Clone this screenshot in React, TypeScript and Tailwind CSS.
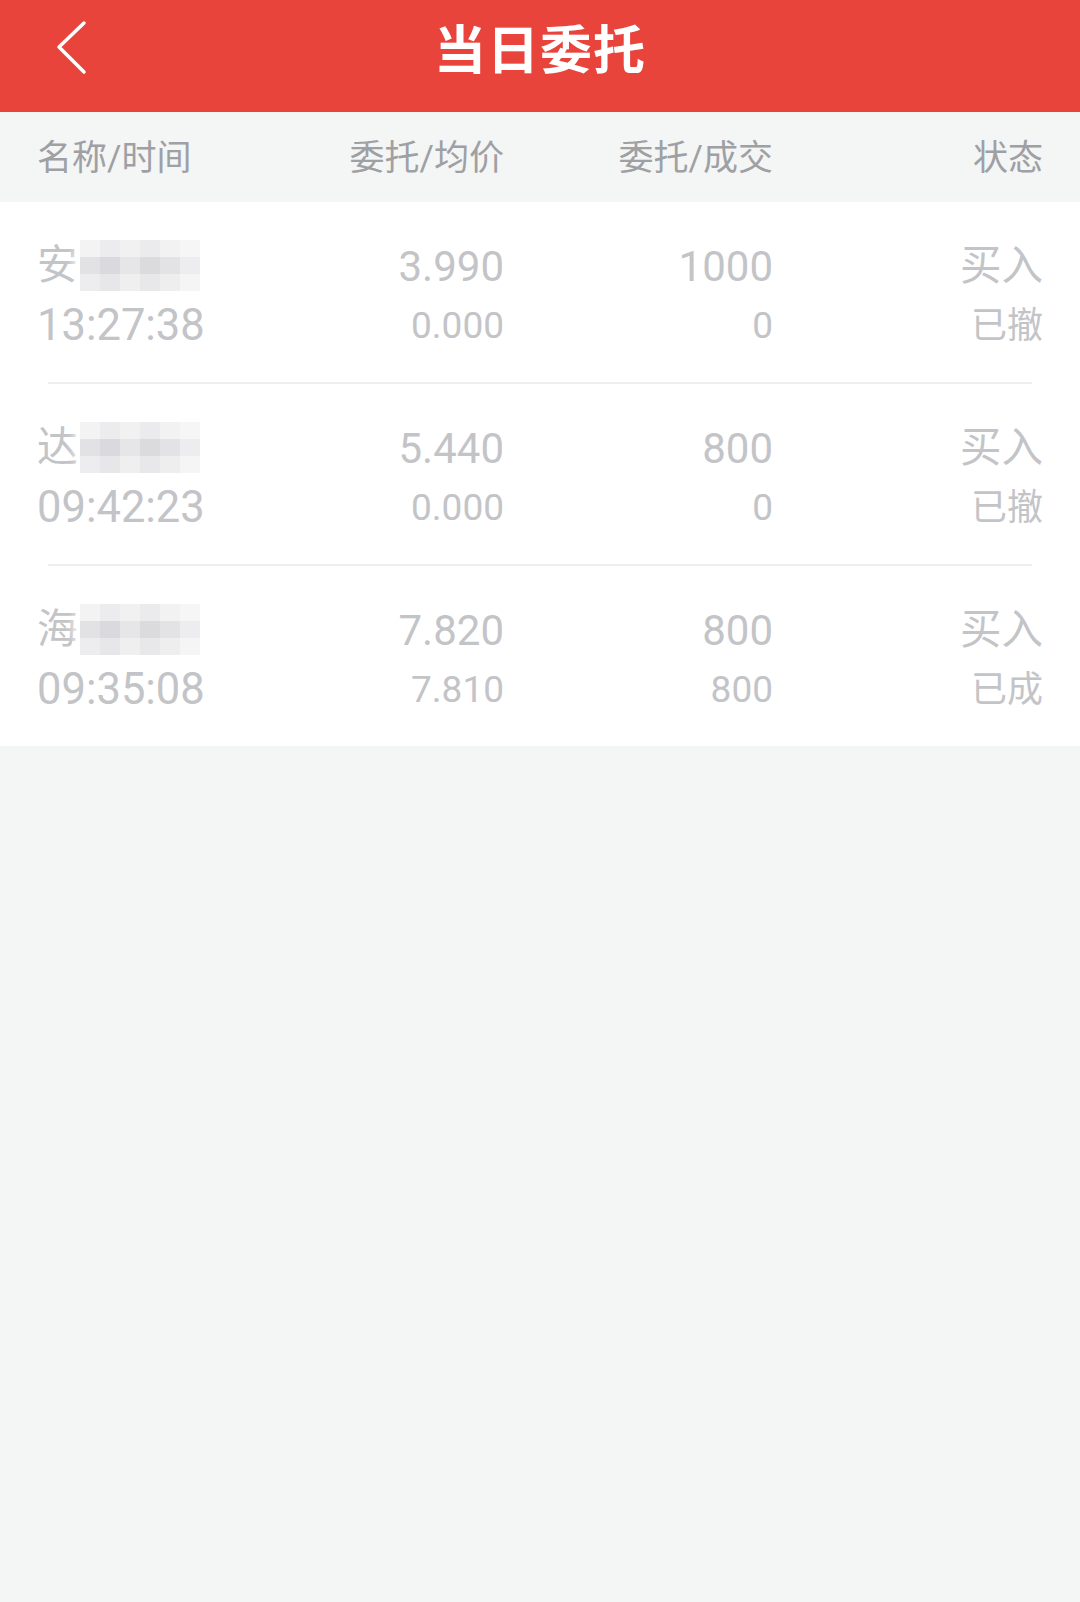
import React from "react";

const ORDERS = [
  { name: "安", time: "13:27:38", price: "3.990", avg: "0.000", qty: "1000", deal: "0", side: "买入", status: "已撤" },
  { name: "达", time: "09:42:23", price: "5.440", avg: "0.000", qty: "800", deal: "0", side: "买入", status: "已撤" },
  { name: "海", time: "09:35:08", price: "7.820", avg: "7.810", qty: "800", deal: "800", side: "买入", status: "已成" },
];

const FONT = { fontFamily: "Roboto, 'Noto Sans CJK SC', sans-serif" };

// pixelated blur over the stock name
const Mosaic = () => {
  const shades = [
    ["#f3f3f4", "#ececee", "#f1f1f2", "#ebebed", "#f2f2f3", "#f6f6f7"],
    ["#e2e2e4", "#dadade", "#e6e6e8", "#dbdbde", "#e3e3e5", "#ededef"],
    ["#ededef", "#e7e7e9", "#efeff0", "#e8e8ea", "#eeeeef", "#f5f5f6"],
  ];
  return (
    <div className="relative ml-[2px] h-[52px] w-[200px]">
      <div className="absolute left-[-6px] top-[-10px] h-[66px] w-[210px] rounded-[33px] bg-white blur-[4px]" />
      <div className="absolute left-0 top-0 flex flex-col">
        {shades.map((row, i) => (
          <div key={i} className="flex">
            {row.map((c, j) => (
              <div key={j} className="h-[17px] w-[20px]" style={{ backgroundColor: c }} />
            ))}
          </div>
        ))}
      </div>
    </div>
  );
};

export default function App() {
  return (
    <div className="min-h-[1602px] w-[1080px] bg-[#f4f5f5]" style={FONT}>
      <header className="relative flex h-[112px] items-center justify-center bg-[#e9443c]">
        <svg className="absolute left-[52px] top-[18px]" width="40" height="60" viewBox="0 0 40 60">
          <path d="M32 5 L7 29 L32 54" fill="none" stroke="white" strokeWidth="3.5" strokeLinecap="round" strokeLinejoin="round" />
        </svg>
        <h1 className="-mt-[8px] text-[52px] font-bold tracking-[1px] text-white">当日委托</h1>
      </header>

      <div className="flex h-[90px] items-center px-[37px] pt-[4px] text-[35px] text-[#9ea0a4]">
        <div className="w-[201px]">名称/时间</div>
        <div className="w-[266px] text-right">委托/均价</div>
        <div className="w-[269px] text-right">委托/成交</div>
        <div className="w-[270px] text-right">状态</div>
      </div>

      <div className="bg-white">
        {ORDERS.map((o, i) => (
          <div key={i}>
            <div className="flex h-[180px] flex-col px-[37px] pt-[34px] text-[#c3c4c7]">
              <div className="flex h-[60px] items-center">
                <div className="flex w-[201px] items-center text-[41px]">
                  <span>{o.name}</span>
                  <Mosaic />
                </div>
                <div className="w-[266px] text-right text-[42px]">{o.price}</div>
                <div className="w-[269px] text-right text-[42px]">{o.qty}</div>
                <div className="w-[270px] text-right text-[41.5px]">{o.side}</div>
              </div>
              <div className="flex h-[60px] items-center">
                <div className="w-[201px] text-[43.5px]">{o.time}</div>
                <div className="w-[266px] text-right text-[37px]">{o.avg}</div>
                <div className="w-[269px] text-right text-[37px]">{o.deal}</div>
                <div className="w-[270px] text-right text-[36px]">{o.status}</div>
              </div>
            </div>
            {i < ORDERS.length - 1 && <div className="mx-[48px] h-[2px] bg-[#eeeeee]" />}
          </div>
        ))}
      </div>
    </div>
  );
}
